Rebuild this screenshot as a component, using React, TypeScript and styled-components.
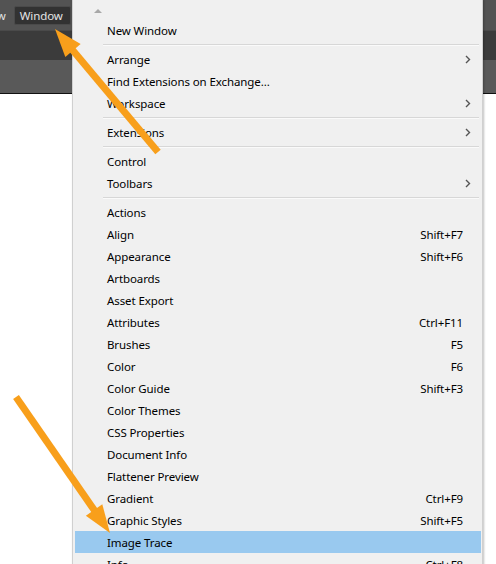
import styled, { createGlobalStyle } from 'styled-components';

const GlobalStyle = createGlobalStyle`
  html, body {
    margin: 0;
    padding: 0;
    background: #ffffff;
    overflow: hidden;
  }
`;

const Page = styled.div`
  position: relative;
  width: 496px;
  height: 564px;
  overflow: hidden;
  background: #ffffff;
  font-family: 'Noto Sans', 'Open Sans', sans-serif;
`;

const Chrome = styled.div`
  display: flex;
  flex-direction: column;
`;

const MenuBar = styled.div`
  height: 30px;
  background: #535353;
  display: flex;
  align-items: flex-start;
  padding-top: 6px;
  box-sizing: border-box;
`;

const BarItem = styled.div<{ $active?: boolean; $offset?: number }>`
  height: 17px;
  display: flex;
  align-items: center;
  padding: 0 7px 0 5px;
  margin-left: ${(p) => p.$offset ?? 0}px;
  font-size: 11.5px;
  letter-spacing: -0.1px;
  color: #e4e4e4;
  border-radius: 2px;
  background: ${(p) => (p.$active ? '#323232' : 'transparent')};
  border: 1px solid ${(p) => (p.$active ? '#4a4a4a' : 'transparent')};
`;

const ToolBand = styled.div`
  height: 30px;
  background: #3b3b3b;
  border-top: 1px solid #4a4a4a;
  box-sizing: border-box;
`;

const ControlBand = styled.div`
  height: 33px;
  background: #595959;
  border-bottom: 1px solid #111111;
`;

const Menu = styled.div`
  position: absolute;
  left: 72px;
  top: -1px;
  width: 411px;
  height: 600px;
  background: #f0f0f0;
  border: 1px solid #d0d0d0;
  box-shadow: 1px 1px 2px rgba(0, 0, 0, 0.25);
  box-sizing: border-box;
  display: flex;
  flex-direction: column;
`;

const ScrollUp = styled.div`
  height: 19px;
  position: relative;
  flex-shrink: 0;

  &::after {
    content: '';
    position: absolute;
    left: 21px;
    top: 9px;
    border-left: 4px solid transparent;
    border-right: 4px solid transparent;
    border-bottom: 4px solid #a8a8a8;
  }
`;

const Row = styled.div<{ $hover?: boolean }>`
  height: 22px;
  flex-shrink: 0;
  margin: 0 1px 0 2px;
  padding: 0 18px 0 32px;
  display: flex;
  align-items: center;
  justify-content: space-between;
  font-size: 11.5px;
  letter-spacing: -0.1px;
  color: #000000;
  background: ${(p) => (p.$hover ? '#99c9ef' : 'transparent')};
`;

const Shortcut = styled.span`
  color: #000000;
`;

const Separator = styled.div`
  height: 7px;
  flex-shrink: 0;
  display: flex;
  align-items: center;
  padding: 0 3px 0 30px;

  &::before {
    content: '';
    flex: 1;
    height: 1px;
    background: #d7d7d7;
    border-bottom: 1px solid #fafafa;
  }
`;

const Chevron = () => (
  <svg width="6" height="9" viewBox="0 0 6 9" style={{ marginRight: -8 }}>
    <path d="M1 1 L4.5 4.5 L1 8" fill="none" stroke="#555" strokeWidth="1.4" />
  </svg>
);

const Annotations = styled.svg`
  position: absolute;
  left: 0;
  top: 0;
  pointer-events: none;
`;

type Item = { label: string; key?: string; sub?: boolean; hover?: boolean } | 'sep';

const items: Item[] = [
  { label: 'New Window' },
  'sep',
  { label: 'Arrange', sub: true },
  { label: 'Find Extensions on Exchange...' },
  { label: 'Workspace', sub: true },
  'sep',
  { label: 'Extensions', sub: true },
  'sep',
  { label: 'Control' },
  { label: 'Toolbars', sub: true },
  'sep',
  { label: 'Actions' },
  { label: 'Align', key: 'Shift+F7' },
  { label: 'Appearance', key: 'Shift+F6' },
  { label: 'Artboards' },
  { label: 'Asset Export' },
  { label: 'Attributes', key: 'Ctrl+F11' },
  { label: 'Brushes', key: 'F5' },
  { label: 'Color', key: 'F6' },
  { label: 'Color Guide', key: 'Shift+F3' },
  { label: 'Color Themes' },
  { label: 'CSS Properties' },
  { label: 'Document Info' },
  { label: 'Flattener Preview' },
  { label: 'Gradient', key: 'Ctrl+F9' },
  { label: 'Graphic Styles', key: 'Shift+F5' },
  { label: 'Image Trace', hover: true },
  { label: 'Info', key: 'Ctrl+F8' },
];

const ORANGE = '#f89f1b';

const Arrow = ({ x1, y1, x2, y2 }: { x1: number; y1: number; x2: number; y2: number }) => {
  const dx = x2 - x1;
  const dy = y2 - y1;
  const len = Math.hypot(dx, dy);
  const ux = dx / len;
  const uy = dy / len;
  const head = 28;
  const half = 10;
  const bx = x2 - ux * head;
  const by = y2 - uy * head;
  const nx = -uy;
  const ny = ux;
  return (
    <g>
      <line x1={x1} y1={y1} x2={bx + ux * 2} y2={by + uy * 2} stroke={ORANGE} strokeWidth="7" />
      <polygon
        points={`${x2},${y2} ${bx + nx * half},${by + ny * half} ${bx - nx * half},${by - ny * half}`}
        fill={ORANGE}
      />
    </g>
  );
};

export default function App() {
  return (
    <Page>
      <GlobalStyle />
      <Chrome>
        <MenuBar>
          <BarItem $offset={-25}>View</BarItem>
          <BarItem $active>Window</BarItem>
        </MenuBar>
        <ToolBand />
        <ControlBand />
      </Chrome>

      <Menu>
        <ScrollUp />
        {items.map((it, i) =>
          it === 'sep' ? (
            <Separator key={i} />
          ) : (
            <Row key={i} $hover={it.hover}>
              <span>{it.label}</span>
              {it.key && <Shortcut>{it.key}</Shortcut>}
              {it.sub && <Chevron />}
            </Row>
          )
        )}
      </Menu>

      <Annotations width="496" height="564" viewBox="0 0 496 564">
        <Arrow x1={158} y1={152} x2={55} y2={29} />
        <Arrow x1={16} y1={397} x2={110} y2={533} />
      </Annotations>
    </Page>
  );
}
